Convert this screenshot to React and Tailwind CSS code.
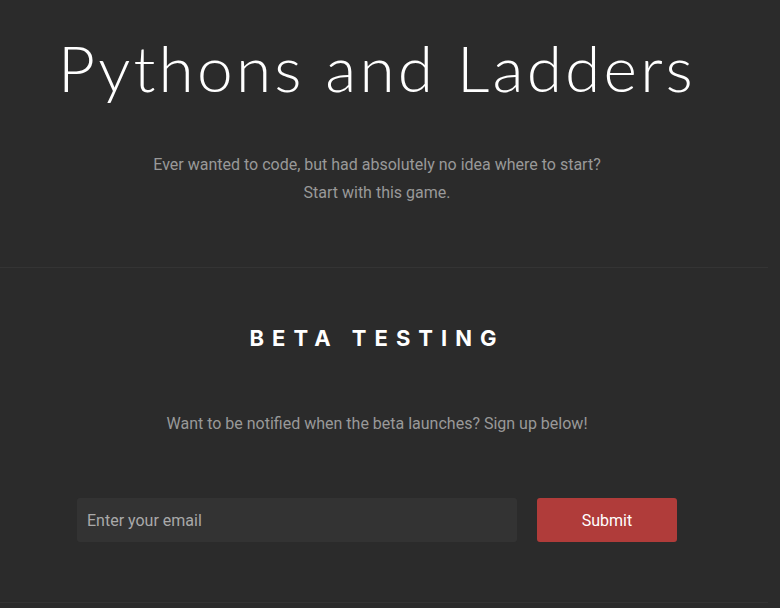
export default function App() {
  return (
    <div className="min-h-screen bg-[#2b2b2b] pr-3 font-['Roboto',sans-serif] text-base leading-7 text-[#999999]">
      <header className="border-b border-[#343434] pt-7 pr-[14px] pb-[60px] text-center">
        <h1 className="font-['Lato',sans-serif] text-[64px] leading-[80px] font-light tracking-wider whitespace-nowrap text-white">
          Pythons and Ladders
        </h1>
        <p className="mt-[43px]">
          Ever wanted to code, but had absolutely no idea where to start?
          <br />
          Start with this game.
        </p>
      </header>
      <section className="border-b border-[#343434] pt-14 pr-[14px] pb-[60px] text-center">
        <h2 className="font-['Inter',sans-serif] text-[22px] leading-7 font-bold tracking-[8px] text-white">
          BETA TESTING
        </h2>
        <p className="mt-[58px]">Want to be notified when the beta launches? Sign up below!</p>
        <form
          className="mx-auto mt-[60px] flex max-w-[600px] gap-5"
          onSubmit={(event) => event.preventDefault()}
        >
          <input
            type="email"
            aria-label="Enter your email"
            placeholder="Enter your email"
            className="h-11 min-w-0 flex-1 rounded-[3px] bg-[#333333] px-[10px] text-white outline-none placeholder:text-[#a9a9a9]"
          />
          <button type="submit" className="h-11 w-[140px] rounded-[3px] bg-[#b03c3a] leading-[46px] text-white">
            Submit
          </button>
        </form>
      </section>
    </div>
  );
}
